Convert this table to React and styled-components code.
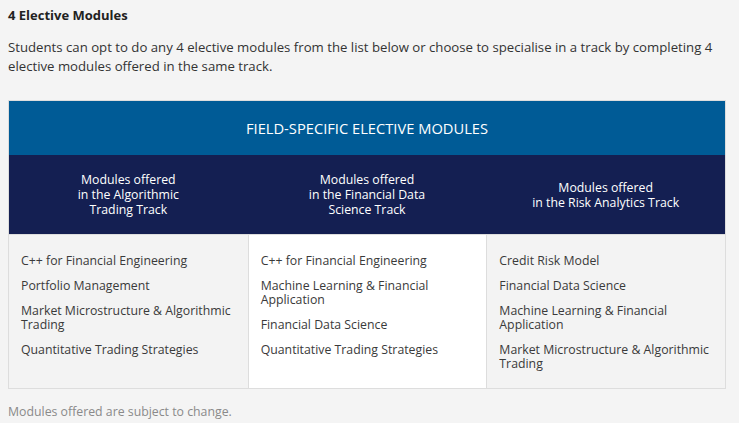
import React from "react";
import styled, { createGlobalStyle } from "styled-components";

const Global = createGlobalStyle`
  html, body { margin: 0; padding: 0; background: #f4f4f4; }
  body { font-family: "Open Sans", "Noto Sans", sans-serif; color: #333; }
`;

const Page = styled.div`
  width: 718px;
  padding: 5px 0 0 8px;
`;

const Heading = styled.h3`
  margin: 0;
  font-size: 13px;
  line-height: 20px;
  font-weight: 700;
  color: #222;
`;

const Intro = styled.p`
  margin: 13px 0 0;
  font-size: 13.2px;
  line-height: 19px;
  color: #333;
`;

const Table = styled.div`
  margin-top: 24px;
  border: 1px solid #dddddd;
  display: grid;
  grid-template-columns: repeat(3, 1fr);
`;

const Title = styled.div`
  grid-column: 1 / -1;
  background: #005b96;
  color: #fff;
  height: 54px;
  display: flex;
  align-items: center;
  justify-content: center;
  font-size: 14.7px;
`;

const TrackHead = styled.div`
  background: #141f52;
  color: #fff;
  height: 79px;
  display: flex;
  align-items: center;
  justify-content: center;
  text-align: center;
  font-size: 12.3px;
  line-height: 15px;
  border-bottom: 1px solid #dddddd;
`;

const Cell = styled.ul`
  list-style: none;
  margin: 0;
  padding: 19px 8px 17px 12px;
  background: ${(p) => (p.$light ? "#ffffff" : "#f3f3f3")};
  border-left: ${(p) => (p.$first ? "none" : "1px solid #dddddd")};
`;

const Item = styled.li`
  font-size: 12.3px;
  line-height: 14px;
  color: #3a3a3a;
  margin-bottom: 11px;
  &:last-child { margin-bottom: 0; }
`;

const Note = styled.p`
  margin: 13px 0 0;
  font-size: 12.3px;
  line-height: 19px;
  color: #8a8a8a;
`;

const heads = [
  ["Modules offered", "in the Algorithmic", "Trading Track"],
  ["Modules offered", "in the Financial Data", "Science Track"],
  ["Modules offered", "in the Risk Analytics Track"],
];

const cols = [
  [
    "C++ for Financial Engineering",
    "Portfolio Management",
    "Market Microstructure & Algorithmic Trading",
    "Quantitative Trading Strategies",
  ],
  [
    "C++ for Financial Engineering",
    "Machine Learning & Financial Application",
    "Financial Data Science",
    "Quantitative Trading Strategies",
  ],
  [
    "Credit Risk Model",
    "Financial Data Science",
    "Machine Learning & Financial Application",
    "Market Microstructure & Algorithmic Trading",
  ],
];

export default function App() {
  return (
    <>
      <Global />
      <Page>
        <Heading>4 Elective Modules</Heading>
        <Intro>
          Students can opt to do any 4 elective modules from the list below or choose to specialise in a track by completing 4 elective modules offered in the same track.
        </Intro>
        <Table>
          <Title>FIELD-SPECIFIC ELECTIVE MODULES</Title>
          {heads.map((h, i) => (
            <TrackHead key={i}>
              <div>
                {h.map((l, j) => (
                  <React.Fragment key={j}>
                    {j > 0 && <br />}
                    {l}
                  </React.Fragment>
                ))}
              </div>
            </TrackHead>
          ))}
          {cols.map((c, i) => (
            <Cell key={i} $first={i === 0} $light={i === 1}>
              {c.map((t, j) => (
                <Item key={j}>{t}</Item>
              ))}
            </Cell>
          ))}
        </Table>
        <Note>Modules offered are subject to change.</Note>
      </Page>
    </>
  );
}
